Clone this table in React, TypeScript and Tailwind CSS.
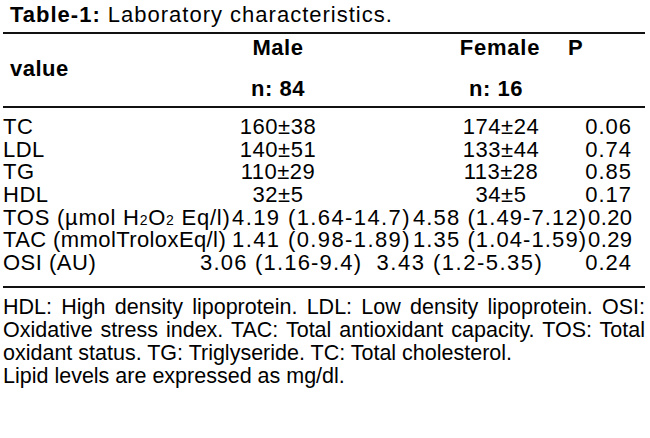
const rows = [
  { label: 'TC', male: '160±38', female: '174±24', p: '0.06' },
  { label: 'LDL', male: '140±51', female: '133±44', p: '0.74' },
  { label: 'TG', male: '110±29', female: '113±28', p: '0.85' },
  { label: 'HDL', male: '32±5', female: '34±5', p: '0.17' },
];

const Rule = () => <div className="h-[2px] bg-[#111]" />;

export default function App() {
  return (
    <div
      className="w-[650px] h-[438px] bg-white text-black overflow-hidden"
      style={{ fontFamily: '"Liberation Sans", Arial, sans-serif' }}
    >
      <div className="pt-[3px] pl-[10px] text-[22px] leading-[23px] tracking-[1px] whitespace-nowrap">
        <span className="font-bold">Table-1:</span> Laboratory characteristics.
      </div>

      <div className="mx-[3px] w-[642px] mt-[6px] text-[22px] tracking-[0.5px]">
        <Rule />

        {/* header */}
        <div className="grid grid-cols-[197px_156px_218px_58px] h-[72px] font-bold leading-[23px]">
          <div className="flex items-center pl-[7px] pb-[4px]">value</div>
          <div className="flex flex-col items-center pt-[2px] gap-[18px]">
            <span>Male</span>
            <span>n: 84</span>
          </div>
          <div className="flex flex-col items-center pt-[2px] pl-[70px] gap-[18px]">
            <span className="tracking-[0.8px]">Female</span>
            <span className="pr-[8px]">n: 16</span>
          </div>
          <div className="pt-[2px] -ml-[6px]">P</div>
        </div>

        <Rule />

        <div className="pt-[8px] leading-[22.7px]">
          {rows.map((r) => (
            <div key={r.label} className="grid grid-cols-[197px_156px_218px_58px] h-[22.7px]">
              <div>{r.label}</div>
              <div className="text-center">{r.male}</div>
              <div className="text-center pl-[72px]">{r.female}</div>
              <div className="text-right tracking-[1px]">{r.p}</div>
            </div>
          ))}

          <div className="flex h-[22.7px] whitespace-nowrap">
            <div className="w-[229px] tracking-[0.75px]">
              TOS (µmol H<span className="text-[14px]">2</span>O<span className="text-[14px]">2</span> Eq/l)
            </div>
            <div className="w-[181px] tracking-[1.4px]">4.19 (1.64-14.7)</div>
            <div className="w-[175px] tracking-[1.1px]">4.58 (1.49-7.12)</div>
            <div className="w-[44px] tracking-[0.4px]">0.20</div>
          </div>

          <div className="flex h-[22.7px] whitespace-nowrap">
            <div className="w-[229px] tracking-[0.4px]">TAC (mmolTroloxEq/l)</div>
            <div className="w-[181px] tracking-[1.4px]">1.41 (0.98-1.89)</div>
            <div className="w-[175px] tracking-[1.1px]">1.35 (1.04-1.59)</div>
            <div className="w-[44px] tracking-[0.4px]">0.29</div>
          </div>

          <div className="grid grid-cols-[197px_156px_218px_58px] h-[22.7px] whitespace-nowrap">
            <div>OSI (AU)</div>
            <div className="text-center tracking-[1.2px]">3.06 (1.16-9.4)</div>
            <div className="text-center pr-[10px] tracking-[1.5px]">3.43 (1.2-5.35)</div>
            <div className="text-right tracking-[1px]">0.24</div>
          </div>
        </div>

        <div className="mt-[11px]">
          <Rule />
        </div>

        <div className="mt-[8px] text-[21.5px] leading-[23px] tracking-normal">
          <div className="text-justify [text-align-last:justify] whitespace-nowrap">
            HDL: High density lipoprotein. LDL: Low density lipoprotein. OSI:
          </div>
          <div className="text-justify [text-align-last:justify] whitespace-nowrap">
            Oxidative stress index. TAC: Total antioxidant capacity. TOS: Total
          </div>
          <div className="whitespace-nowrap">oxidant status. TG: Triglyseride. TC: Total cholesterol.</div>
          <div className="whitespace-nowrap">Lipid levels are expressed as mg/dl.</div>
        </div>
      </div>
    </div>
  );
}
